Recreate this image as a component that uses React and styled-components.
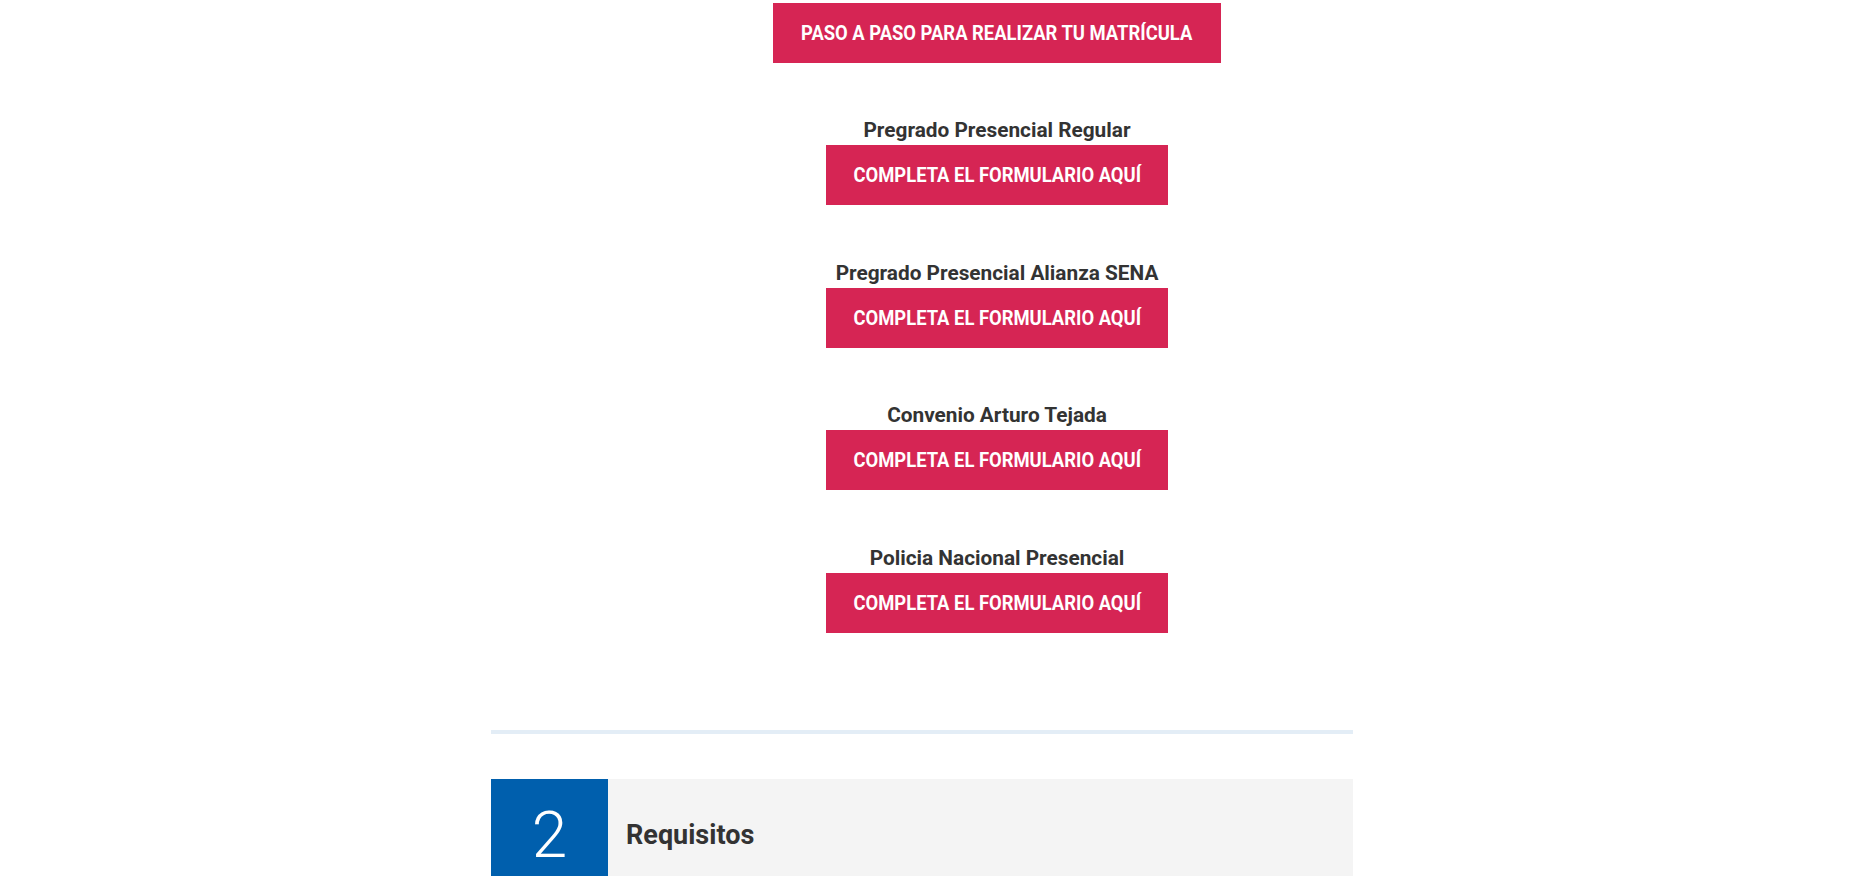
import React from "react";
import styled, { createGlobalStyle } from "styled-components";

const GlobalStyle = createGlobalStyle`
  body {
    margin: 0;
    background: #ffffff;
    font-family: Roboto, "Liberation Sans", Arial, sans-serif;
  }
`;

const forms = [
  "Pregrado Presencial Regular",
  "Pregrado Presencial Alianza SENA",
  "Convenio Arturo Tejada",
  "Policia Nacional Presencial",
];

const Page = styled.div`
  padding-right: 10px;
`;

const Column = styled.div`
  width: 862px;
  margin: 0 auto;
`;

const Buttons = styled.div`
  display: flex;
  flex-direction: column;
  align-items: center;
  padding: 3px 0 0 150px;
`;

const RedButton = styled.a`
  display: flex;
  align-items: center;
  justify-content: center;
  width: ${(p) => p.$width}px;
  height: 60px;
  background: #d62554;
  color: #ffffff;
  text-decoration: none;
  cursor: pointer;
`;

const ButtonText = styled.span`
  font-family: Roboto, "Liberation Sans", sans-serif;
  font-weight: 700;
  font-size: 20px;
  text-transform: uppercase;
  white-space: nowrap;
  transform: scaleX(0.92);
`;

const Group = styled.div`
  display: flex;
  flex-direction: column;
  align-items: center;
  margin-top: ${(p) => (p.$first ? 55 : 55.5)}px;
`;

const Label = styled.div`
  font-size: 20.8px;
  line-height: 24px;
  font-weight: 700;
  color: #333333;
  margin-bottom: 3px;
`;

const Divider = styled.hr`
  margin: 97px 0 45px;
  border: 0;
  height: 4px;
  background: #e3edf6;
`;

const StepHeader = styled.div`
  display: flex;
  align-items: center;
  height: 117px;
  background: #f4f4f4;
`;

const StepNumber = styled.div`
  width: 117px;
  height: 100%;
  display: flex;
  align-items: center;
  justify-content: center;
  background: #005fad;
  color: #ffffff;
  font-size: 64px;
  font-weight: 300;
  padding-bottom: 4px;
  box-sizing: border-box;
`;

const StepTitle = styled.h2`
  margin: 0 0 4px 18px;
  font-size: 27px;
  font-weight: 700;
  color: #333333;
`;

export default function App() {
  return (
    <Page>
      <GlobalStyle />
      <Column>
        <Buttons>
          <RedButton $width={448}>
            <ButtonText>Paso a paso para realizar tu matrícula</ButtonText>
          </RedButton>
          {forms.map((name, i) => (
            <Group key={name} $first={i === 0}>
              <Label>{name}</Label>
              <RedButton $width={342}>
                <ButtonText>Completa el formulario aquí</ButtonText>
              </RedButton>
            </Group>
          ))}
        </Buttons>
        <Divider />
        <StepHeader>
          <StepNumber>2</StepNumber>
          <StepTitle>Requisitos</StepTitle>
        </StepHeader>
      </Column>
    </Page>
  );
}
